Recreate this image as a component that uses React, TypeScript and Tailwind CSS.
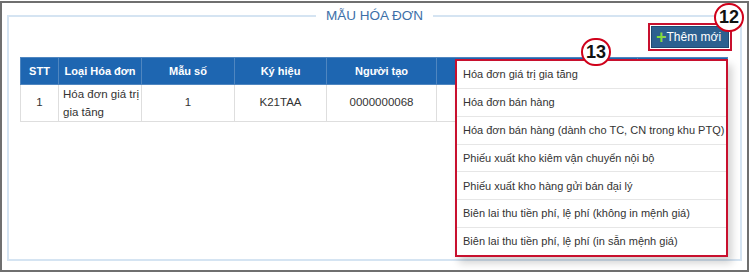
import React from "react";

const items = [
  "Hóa đơn giá trị gia tăng",
  "Hóa đơn bán hàng",
  "Hóa đơn bán hàng (dành cho TC, CN trong khu PTQ)",
  "Phiếu xuất kho kiêm vận chuyển nội bộ",
  "Phiếu xuất kho hàng gửi bán đại lý",
  "Biên lai thu tiền phí, lệ phí (không in mệnh giá)",
  "Biên lai thu tiền phí, lệ phí (in sẵn mệnh giá)",
];

export default function App() {
  return (
    <div
      className="w-[749px] h-[273px] bg-white pt-px relative overflow-hidden"
      style={{ fontFamily: '"Liberation Sans", Arial, sans-serif' }}
    >
      <div className="h-[271px] border-2 border-[#6f6f6f] px-[5px] pt-[5px] pb-[9px]">
        <fieldset className="h-full border-2 border-[#d5e4f2] pl-[11px] pr-[11px]">
          <legend className="mx-auto px-[10px] text-[13.5px] leading-[16px] text-[#3d6fa8]">
            MẪU HÓA ĐƠN
          </legend>
          <div className="flex justify-end -mt-px">
            <div className="border-2 border-[#c8102e] p-px mr-[-3px]">
              <button className="h-[22px] w-[78px] bg-[#2c6090] border border-[#1f4a72] text-white text-[12px] flex items-center justify-start pl-[4px]">
                <span className="text-[#86d93f] text-[18px] font-bold leading-none -mt-px">+</span>
                <span>Thêm mới</span>
              </button>
            </div>
          </div>
          <table className="mt-[6px] w-[708px] border-collapse text-[11.5px] text-[#333]">
            <thead>
              <tr className="bg-[#1e66b1] text-white text-[11px] font-bold h-[27px]">
                <th className="w-[38px] border border-[#4f86c0] font-bold">STT</th>
                <th className="w-[83px] border border-[#4f86c0] font-bold">Loại Hóa đơn</th>
                <th className="w-[93px] border border-[#4f86c0] font-bold">Mẫu số</th>
                <th className="w-[92px] border border-[#4f86c0] font-bold">Ký hiệu</th>
                <th className="w-[110px] border border-[#4f86c0] font-bold">Người tạo</th>
                <th className="border border-[#4f86c0] font-bold"></th>
                <th className="w-[90px] border border-[#4f86c0] font-bold"></th>
              </tr>
            </thead>
            <tbody>
              <tr className="h-[37px]">
                <td className="border border-[#dedede] text-center">1</td>
                <td className="border border-[#dedede] pl-[4px] pr-0 leading-[18px]">Hóa đơn giá trị gia tăng</td>
                <td className="border border-[#dedede] text-center">1</td>
                <td className="border border-[#dedede] text-center">K21TAA</td>
                <td className="border border-[#dedede] text-center">0000000068</td>
                <td className="border border-[#dedede] text-center"></td>
                <td className="border border-[#dedede] text-center"></td>
              </tr>
            </tbody>
          </table>
        </fieldset>
      </div>

      {/* dropdown menu */}
      <div className="absolute left-[455px] top-[59px] w-[273px] h-[198px] bg-white border-2 border-[#c8102e] shadow-[4px_6px_8px_rgba(0,0,0,0.18)] flex flex-col">
        {items.map((t, i) => (
          <div
            key={i}
            className={`flex-1 flex items-center pl-[6px] text-[11px] whitespace-nowrap text-[#333] ${i < items.length - 1 ? "border-b border-[#e6e6e6]" : ""}`}
          >
            {t}
          </div>
        ))}
      </div>

      {/* annotation circles */}
      <div className="absolute left-[714px] top-[3px] w-[30px] h-[29px] rounded-full border-2 border-[#d0021b] bg-white flex items-center justify-center text-[18px] font-bold text-[#111]">
        12
      </div>
      <div className="absolute left-[581px] top-[38px] w-[30px] h-[28px] rounded-full border-2 border-[#d0021b] bg-white flex items-center justify-center text-[18px] font-bold text-[#111]">
        13
      </div>
    </div>
  );
}
